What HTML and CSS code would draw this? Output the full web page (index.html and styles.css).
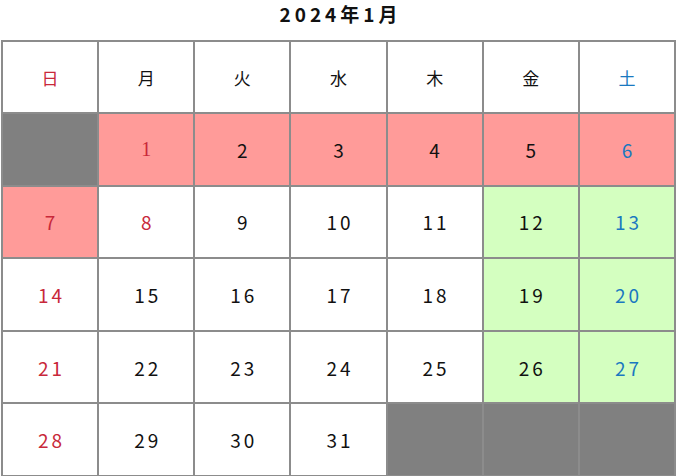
FILE: index.html
```html
<!DOCTYPE html>
<html lang="ja">
<head>
<meta charset="utf-8">
<link rel="stylesheet" href="styles.css">
</head>
<body>
<h1 class="title">2024年1月</h1>
<table class="cal">
  <thead>
    <tr>
      <th class="sun">日</th><th>月</th><th>火</th><th>水</th><th>木</th><th>金</th><th class="sat">土</th>
    </tr>
  </thead>
  <tbody>
    <tr>
      <td class="empty"></td>
      <td class="hol sunc serif">1</td>
      <td class="hol">2</td>
      <td class="hol">3</td>
      <td class="hol">4</td>
      <td class="hol">5</td>
      <td class="hol sat">6</td>
    </tr>
    <tr>
      <td class="hol sunc">7</td>
      <td class="sunc">8</td>
      <td>9</td>
      <td>10</td>
      <td>11</td>
      <td class="green">12</td>
      <td class="green sat">13</td>
    </tr>
    <tr>
      <td class="sunc">14</td>
      <td>15</td>
      <td>16</td>
      <td>17</td>
      <td>18</td>
      <td class="green">19</td>
      <td class="green sat">20</td>
    </tr>
    <tr>
      <td class="sunc">21</td>
      <td>22</td>
      <td>23</td>
      <td>24</td>
      <td>25</td>
      <td class="green">26</td>
      <td class="green sat">27</td>
    </tr>
    <tr>
      <td class="sunc">28</td>
      <td>29</td>
      <td>30</td>
      <td>31</td>
      <td class="empty"></td>
      <td class="empty"></td>
      <td class="empty"></td>
    </tr>
  </tbody>
</table>
</body>
</html>
```
FILE: styles.css
```css
html, body {
  margin: 0;
  padding: 0;
  background: #fff;
}
body {
  font-family: "Noto Sans CJK JP", "Noto Sans", sans-serif;
  color: #111;
}
.title {
  margin: 0;
  height: 40px;
  padding-top: 2px;
  box-sizing: border-box;
  text-align: center;
  font-size: 19px;
  line-height: 24px;
  font-weight: 700;
  letter-spacing: 4px;
  text-indent: 4px;
}
.cal {
  margin-left: 1px;
  width: 675px;
  border-collapse: collapse;
  table-layout: fixed;
}
.cal th, .cal td {
  border: 2px solid #8c8c8c;
  text-align: center;
  vertical-align: middle;
  padding: 0;
  font-size: 19px;
  font-weight: 400;
  letter-spacing: 3px;
  text-indent: 3px;
}
.cal th {
  height: 70px;
  font-size: 17px;
  letter-spacing: 0;
  text-indent: 0;
}
.cal td {
  height: 70.6px;
}
.cal td.serif {
  font-family: "Liberation Serif", serif;
  font-size: 20px;
}
.sun, .sunc { color: #c8283a; }
.sat { color: #1a78c0; }
.hol { background: #ff9b99; }
.green { background: #d4ffc0; }
.empty { background: #808080; }
```
